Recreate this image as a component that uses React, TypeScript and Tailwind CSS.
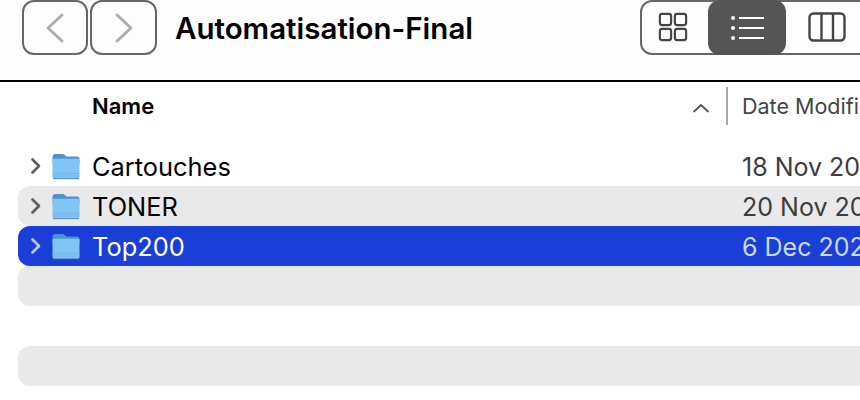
import React from "react";

const Folder = () => (
  <svg width="30" height="28" viewBox="0 0 30 28" className="shrink-0">
    <path d="M1.500 5a3 3 0 0 1 3-3h7a3 3 0 0 1 2 .8L15.500 4.500H26a2.500 2.500 0 0 1 2.500 2.500V12h-27z" fill="#4a94cf" />
    <path d="M1.500 8a1.200 1.200 0 0 1 1.200-1.200h24.600A1.200 1.200 0 0 1 28.500 8v17a2 2 0 0 1-2 2h-23a2 2 0 0 1-2-2z" fill="#82c4f5" />
    <path d="M1.500 21.500h27M1.500 24h27" stroke="#71b4e8" strokeWidth="0.800" />
    <path d="M2 26.700h26" stroke="#4f8dbf" strokeWidth="1" />
  </svg>
);

const Chevron = ({ color }: { color: string }) => (
  <svg width="12" height="18" viewBox="0 0 12 18" className="shrink-0" fill="none">
    <path d="M2.500 2.500 9 9l-6.500 6.500" stroke={color} strokeWidth="2.700" strokeLinecap="round" strokeLinejoin="round" />
  </svg>
);

type RowProps = {
  name?: string;
  date?: string;
  striped?: boolean;
  selected?: boolean;
};

const Row = ({ name, date, striped, selected }: RowProps) => {
  const bg = selected ? "bg-[#1a3fd6]" : striped ? "bg-[#e9e9e9]" : "bg-white";
  return (
    <div className={`flex h-10 items-center rounded-l-xl ${bg}`}>
      {name && (
        <>
          <div className="ml-3 w-[21px] shrink-0">
            <Chevron color={selected ? "#b9c6f2" : "#5f5f5f"} />
          </div>
          <Folder />
          <div className={`ml-[11px] w-[650px] shrink-0 pt-[3px] text-[25.400px] ${selected ? "text-white" : "text-black"}`}>{name}</div>
          <div className={`pt-[3px] text-[25px] whitespace-nowrap ${selected ? "text-[#ccd6f7]" : "text-[#3c3c3c]"}`}>{date}</div>
        </>
      )}
    </div>
  );
};

export default function App() {
  return (
    <div className="h-[400px] w-[860px] overflow-hidden bg-white font-['Inter',sans-serif]">
      {/* Toolbar */}
      <div className="flex h-[82px] items-start border-b-2 border-black bg-[#fdfdfd] pl-[22px]">
        <div className="flex shrink-0 gap-[2px]">
          <button className="flex h-[55px] w-[66px] items-center justify-center rounded-xl border-2 border-[#666]">
            <svg width="20" height="30" viewBox="0 0 20 30" fill="none">
              <path d="M17 2 3 15l14 13" stroke="#ababab" strokeWidth="2.800" strokeLinecap="round" strokeLinejoin="round" />
            </svg>
          </button>
          <button className="flex h-[55px] w-[67px] items-center justify-center rounded-xl border-2 border-[#666]">
            <svg width="20" height="30" viewBox="0 0 20 30" fill="none">
              <path d="M3 2l14 13L3 28" stroke="#ababab" strokeWidth="2.800" strokeLinecap="round" strokeLinejoin="round" />
            </svg>
          </button>
        </div>
        <h1 className="ml-[18px] w-[465px] shrink-0 pt-[9px] text-[29.500px] font-semibold leading-[38px] whitespace-nowrap text-black">
          Automatisation-Final
        </h1>
        {/* View switcher */}
        <div className="flex h-[55px] w-[240px] shrink-0 items-center rounded-xl border-2 border-[#666]">
          <div className="w-[66px] shrink-0 pl-[16px]">
            <svg width="30" height="30" viewBox="0 0 32 32" fill="none" stroke="#444" strokeWidth="2.300" className="mb-[1px] block">
              <rect x="2" y="2" width="12" height="12" rx="2.500" />
              <rect x="18" y="2" width="12" height="12" rx="2.500" />
              <rect x="2" y="18" width="12" height="12" rx="2.500" />
              <rect x="18" y="18" width="12" height="12" rx="2.500" />
            </svg>
          </div>
          <div className="flex h-[55px] w-[78px] shrink-0 items-center justify-center rounded-xl bg-[#555]">
            <svg width="36" height="26" viewBox="0 0 36 26" fill="none">
              <circle cx="4" cy="3" r="2" fill="#fff" />
              <circle cx="4" cy="13" r="2" fill="#fff" />
              <circle cx="4" cy="23" r="2" fill="#fff" />
              <path d="M10 3h25M10 13h25M10 23h25" stroke="#fff" strokeWidth="1.800" />
            </svg>
          </div>
          <div className="ml-[22px] shrink-0">
            <svg width="38" height="30" viewBox="0 0 38 30" fill="none" stroke="#444" strokeWidth="2.400" className="mb-[1px] block">
              <rect x="1.500" y="1.500" width="35" height="27" rx="4" />
              <path d="M13.500 1.500v27M25 1.500v27" />
            </svg>
          </div>
        </div>
      </div>

      {/* Column header */}
      <div className="flex h-[48px] items-center pl-[92px]">
        <div className="w-[600px] shrink-0 text-[22px] font-semibold text-black">Name</div>
        <svg width="18" height="10" viewBox="0 0 18 10" fill="none" className="mt-1 shrink-0">
          <path d="M2 8.500 9 2l7 6.500" stroke="#555" strokeWidth="1.800" strokeLinecap="round" strokeLinejoin="round" />
        </svg>
        <div className="ml-[16px] h-[38px] w-[2px] shrink-0 bg-[#a8a8a8]" />
        <div className="ml-[14px] shrink-0 text-[21.500px] whitespace-nowrap text-[#444]">Date Modified</div>
      </div>

      {/* Rows */}
      <div className="ml-[18px] mt-4">
        <Row name="Cartouches" date="18 Nov 2021" />
        <Row name="TONER" date="20 Nov 2021" striped />
        <Row name="Top200" date="6 Dec 2021" selected />
        <Row striped />
        <Row />
        <Row striped />
      </div>
    </div>
  );
}
